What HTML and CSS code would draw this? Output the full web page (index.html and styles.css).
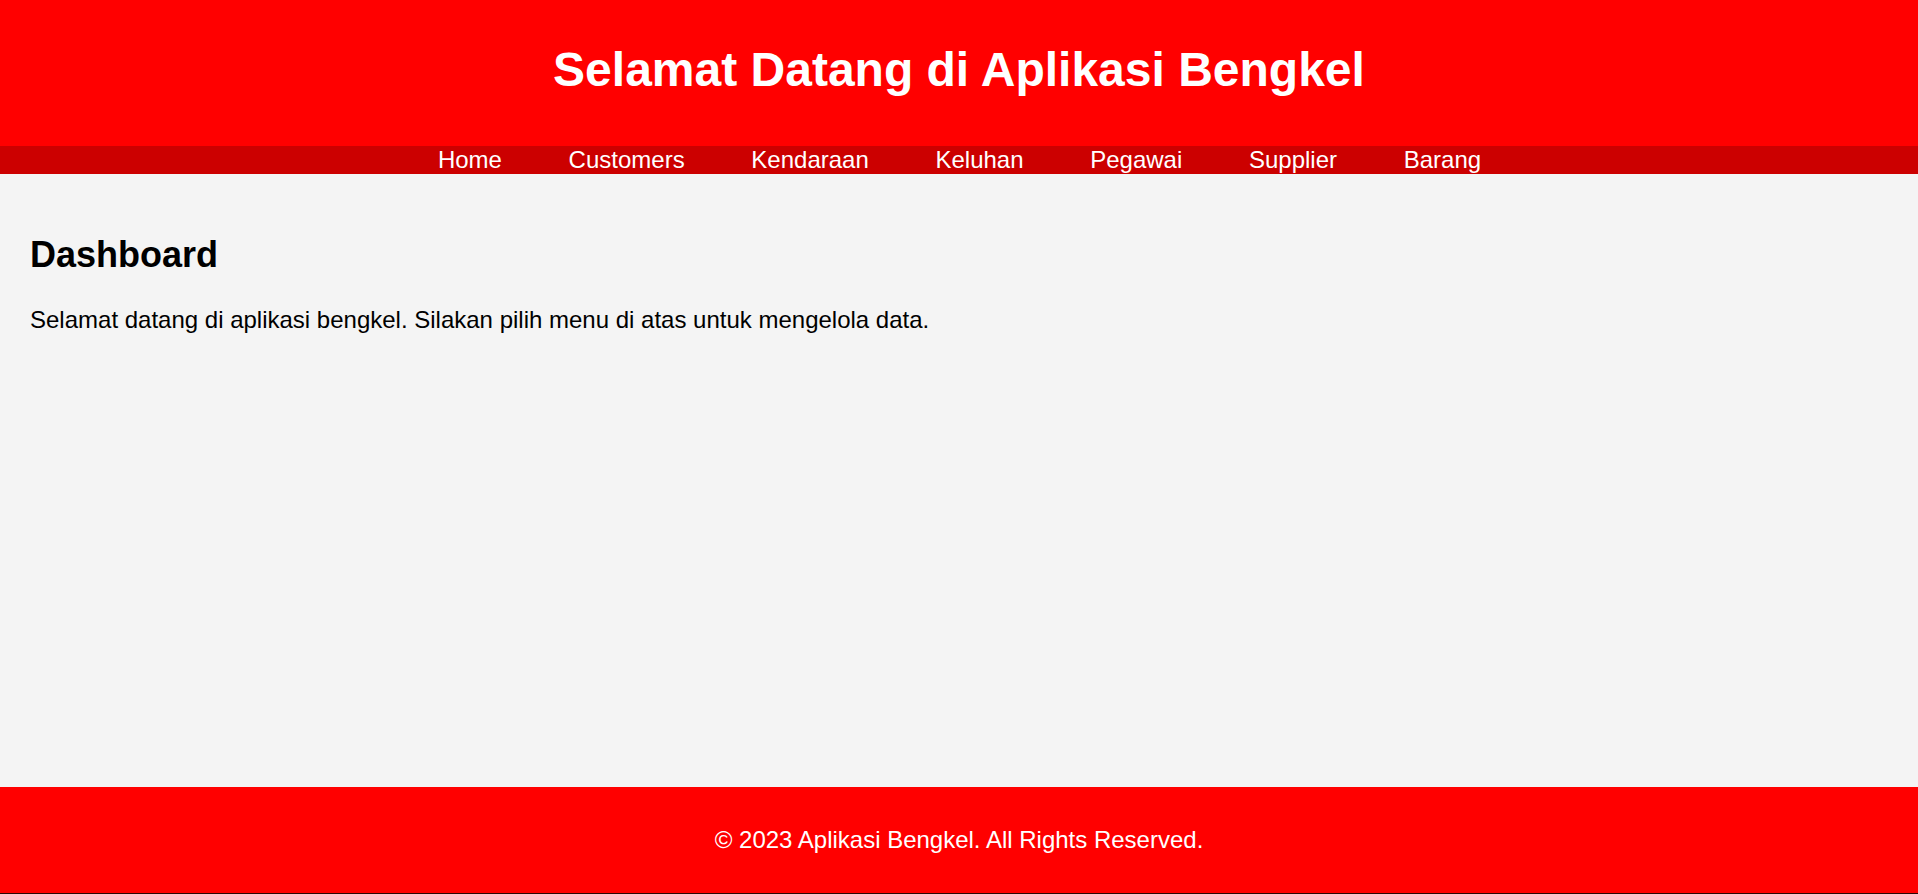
FILE: index.html
```html
<!DOCTYPE html>
<html lang="id">
<head>
<meta charset="utf-8">
<title>Aplikasi Bengkel</title>
<link rel="stylesheet" href="styles.css">
</head>
<body>
  <header class="site-header">
    <h1 class="site-title">Selamat Datang di Aplikasi Bengkel</h1>
  </header>
  <nav class="site-nav">
    <ul class="nav-list">
      <li><a href="#">Home</a></li>
      <li><a href="#">Customers</a></li>
      <li><a href="#">Kendaraan</a></li>
      <li><a href="#">Keluhan</a></li>
      <li><a href="#">Pegawai</a></li>
      <li><a href="#">Supplier</a></li>
      <li><a href="#">Barang</a></li>
    </ul>
  </nav>
  <main class="content">
    <h2 class="content-title">Dashboard</h2>
    <p class="content-text">Selamat datang di aplikasi bengkel. Silakan pilih menu di atas untuk mengelola data.</p>
  </main>
  <footer class="site-footer">
    <p class="footer-text">&copy; 2023 Aplikasi Bengkel. All Rights Reserved.</p>
  </footer>
</body>
</html>
```
FILE: styles.css
```css
html, body {
  margin: 0;
  padding: 0;
}

body {
  font-family: "Liberation Sans", Arial, sans-serif;
  font-size: 24px;
  background: #f4f4f4;
  color: #000;
  min-height: 100vh;
  display: flex;
  flex-direction: column;
}

.site-header {
  background: #ff0000;
  color: #fff;
  text-align: center;
  padding: 42px 0 49px;
}

.site-title {
  margin: 0;
  font-size: 48px;
  font-weight: bold;
}

.site-nav {
  background: #cc0000;
}

.nav-list {
  list-style: none;
  margin: 0;
  padding: 0 0 0 1px;
  display: flex;
  justify-content: center;
  gap: 66.7px;
}

.nav-list a {
  color: #fff;
  text-decoration: none;
  font-size: 24px;
}

.content {
  flex: 1;
  padding: 30px;
}

.content-title {
  font-size: 36px;
  font-weight: bold;
  margin: 29.9px 0;
}

.content-text {
  margin: 0;
  font-size: 24px;
}

.site-footer {
  background: #ff0000;
  color: #fff;
  text-align: center;
  padding: 15px 0;
  border-bottom: 1px solid #2a0505;
}

.footer-text {
  margin: 24px 0;
}
```
